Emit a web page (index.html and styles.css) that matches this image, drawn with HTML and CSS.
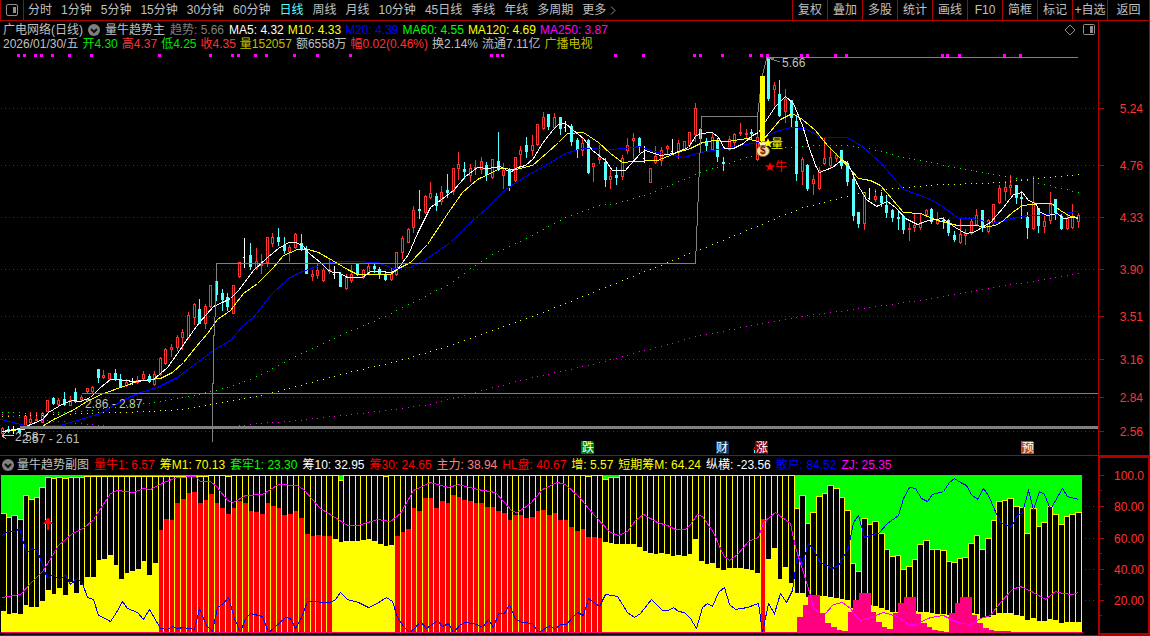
FILE: index.html
```html
<!DOCTYPE html>
<html lang="zh-CN">
<head>
<meta charset="utf-8">
<title>广电网络 日线</title>
<link rel="stylesheet" href="styles.css">
</head>
<body>
<div class="app">
  <header class="topbar">
    <button class="side-toggle" aria-label="侧栏">
      <svg class="icon" width="14" height="14" viewBox="0 0 14 14"><rect x="1.500" y="1.500" width="11" height="11" rx="1.500" class="ico-line"/><rect x="8" y="4" width="3" height="6" class="ico-fill"/></svg>
    </button>
    <nav class="periods">
      <button>分时</button><button>1分钟</button><button>5分钟</button><button>15分钟</button><button>30分钟</button><button>60分钟</button><button class="active">日线</button><button>周线</button><button>月线</button><button>10分钟</button><button>45日线</button><button>季线</button><button>年线</button><button>多周期</button><button class="more">更多<svg class="icon" width="6" height="9" viewBox="0 0 6 9"><path d="M1 .5 5 4.500 1 8.500" class="ico-line"/></svg></button>
    </nav>
    <div class="tools">
      <button>复权</button><button>叠加</button><button>多股</button><button>统计</button><button>画线</button><button>F10</button><button>简框</button><button>标记</button><button>+自选</button><button class="back">返回</button>
    </div>
  </header>

  <main>
    <section class="panel">
      <div class="plot">
        <div class="info main-info">
          <div class="line">
            <span>广电网络(日线)</span>
            <button class="drop" aria-label="指标菜单"><svg class="icon" width="12" height="12" viewBox="0 0 12 12"><circle cx="6" cy="6" r="6" class="ico-disc"/><path d="M3 5 6 8 9 5" class="ico-check"/></svg></button>
            <span>量牛趋势主</span>
            <span class="dim">趋势: 5.66</span>
            <span class="metrics"><span class="white">MA5: 4.32</span><span class="yellow">M10: 4.33</span><span class="blue">M20: 4.39</span><span class="green">MA60: 4.55</span><span class="yellow">MA120: 4.69</span><span class="magenta">MA250: 3.87</span></span>
            <span class="corner">
              <svg class="icon" width="12" height="12" viewBox="0 0 12 12"><path d="M6 1 11 6 6 11 1 6Z" class="ico-line"/></svg>
              <svg class="icon" width="12" height="12" viewBox="0 0 12 12"><rect x=".5" y=".5" width="11" height="10" rx="1" class="ico-line"/><rect x="7" y="2" width="3" height="7" class="ico-fill"/></svg>
            </span>
          </div>
          <div class="line quote">
            <span>2026/01/30/五</span><span class="lime">开4.30</span><span class="red">高4.37</span><span class="lime">低4.25</span><span class="red">收4.35</span><span class="olive">量152057</span><span>额6558万</span><span class="red">幅0.02(0.46%)</span><span>换2.14%</span><span>流通7.11亿</span><span class="olive">广播电视</span>
          </div>
        </div>
        <svg id="price" class="chart" viewBox="0 51 1098 404" role="img" aria-label="日K线图">
          <g id="grid"></g>
          <g id="signals"></g>
          <g id="candles"></g>
          <g id="averages"></g>
          <path class="trend" d="M212.500 442V383H213.500V335H214.500L216.500 263.500H695.500L701.500 116.500H757.500L762 77 767 57.500H1078"/>
          <path class="trend" d="M82 393.500H1098"/>
          <rect class="band" x="20" y="426" width="1078" height="3"/>
          <path class="trend" d="M768 58 780 62M769 58H774"/>
          <rect class="surge" x="760" y="76" width="5" height="65"/>
          <g class="smooth">
            <path class="star-y" d="M768 138l1.400 3.400 3.700.2-2.900 2.300 1 3.600-3.200-2-3.100 2 1-3.600-2.900-2.300 3.600-.2Z"/>
            <path class="knot" d="M759 142l2 1 2-1.500 2 1.500 1.500-.5-1.500 4h-5Z"/>
            <ellipse cx="763" cy="151" rx="6.500" ry="5.500" class="bag"/>
            <text class="coin" x="760" y="154">$</text>
            <path class="star-r" d="M770 162l1.400 3.200 3.700.2-2.900 2.300 1 3.400-3.200-1.900-3.100 1.900 1-3.400-2.900-2.300 3.600-.2Z"/>
          </g>
          <text class="t-yellow" x="771" y="148">量</text>
          <text class="t-red" x="775" y="171">牛</text>
          <text x="782" y="67">5.66</text>
          <text x="85" y="408">2.86 - 2.87</text>
          <path class="mark-line" d="M2 435.500H14M2.500 436 6 432M2.500 436 6 439"/>
          <text x="15" y="441">2.58</text>
          <text x="22" y="443">2.57 - 2.61</text>
          <g class="badge">
            <path fill="#008000" d="M581 441H593L594 443V454H581Z"/><text x="582" y="452">跌</text>
            <path fill="#003870" d="M716 441H728L729 443V454H716Z"/><text x="716" y="452">财</text>
            <path fill="#ff0000" d="M753 450 756 445V448Z"/><path fill="#54ffff" d="M754 450H756V453H754Z"/>
            <path fill="#800000" d="M755 441H767L768 443V454H755Z"/><text x="756" y="452">涨</text>
            <path fill="#c04810" d="M1021 441H1033L1034 443V454H1021Z"/><text x="1022" y="452">预</text>
          </g>
        </svg>
      </div>
      <svg class="axis" viewBox="1098 21 52 434" id="priceAxis" role="img" aria-label="价格刻度"></svg>
    </section>

    <section class="panel">
      <div class="plot">
        <div class="info sub-info">
          <button class="drop" aria-label="副图菜单"><svg class="icon" width="12" height="12" viewBox="0 0 12 12"><circle cx="6" cy="6" r="6" class="ico-disc"/><path d="M3 5 6 8 9 5" class="ico-check"/></svg></button>
          <div class="line">
            <span>量牛趋势副图</span><span class="pure">量牛1: 6.57</span><span class="yellow">筹M1: 70.13</span><span class="green">套牢1: 23.30</span><span class="white">筹10: 32.95</span><span class="pure">筹30: 24.65</span><span class="pink">主力: 38.94</span><span class="pure">HL盘: 40.67</span><span class="yellow">增: 5.57</span><span class="yellow">短期筹M: 64.24</span><span class="white">纵横: -23.56</span><span class="blue">散户: 84.52</span><span class="magenta">ZJ: 25.35</span>
          </div>
        </div>
        <svg id="sub" class="chart" viewBox="0 475 1098 160" role="img" aria-label="量牛趋势副图">
          <g id="columns"></g>
          <g id="curves"></g>
          <path class="base" d="M1 632.500H1083"/>
          <path class="buy" d="M48 517 53 524H49V530H47V524H43Z"/>
        </svg>
      </div>
      <svg class="axis sub-axis" viewBox="1098 456 52 179" id="subAxis" role="img" aria-label="副图刻度"></svg>
    </section>
  </main>
</div>
<script src="chart.js"></script>
</body>
</html>
```

FILE: styles.css
```css
* { box-sizing: border-box; }

body {
  margin: 0;
  background: #000;
  color: #c0c0c0;
  font: 12px/14px "Liberation Sans", "Noto Sans CJK SC", sans-serif;
}

button {
  margin: 0;
  padding: 0;
  border: 0;
  background: none;
  color: inherit;
  font: inherit;
  white-space: nowrap;
  cursor: pointer;
}

.app { overflow: hidden; }
.icon { display: block; flex: none; }
.ico-line { fill: none; stroke: #909090; }
.ico-fill { fill: #909090; }
.ico-disc { fill: #808080; }
.ico-check { fill: none; stroke: #101010; stroke-width: 2; }

.topbar {
  display: flex;
  height: 21px;
  border-bottom: 1px solid #b00000;
}
.side-toggle {
  display: grid;
  place-items: center;
  width: 24px;
  border: solid #b00000;
  border-width: 0 1px;
}
.periods { display: flex; gap: 9px; padding-left: 4px; }
.periods .active { color: #54ffff; }
.more { display: flex; align-items: center; gap: 4px; }
.tools { display: flex; margin-left: auto; border-right: 1px solid #b00000; }
.tools button { width: 35px; border-left: 1px solid #b00000; }
.tools .back { width: 42px; }

.panel {
  display: flex;
  border-bottom: 1px solid #b00000;
}
.plot { flex: 1098; min-width: 0; }
.axis { flex: 52; min-width: 0; display: block; }
.chart { display: block; width: 100%; height: auto; }

.info { white-space: nowrap; }
.main-info { padding: 2px 3px 0; }
.line { display: flex; align-items: center; gap: 5px; height: 14px; }
.quote { gap: 4px; }
.metrics { display: flex; gap: 4px; }
.corner { display: flex; gap: 7px; margin-left: auto; }
.sub-info { display: flex; gap: 3px; align-items: center; height: 19px; padding: 0 0 2px 2px; }

.dim { color: #808080; }
.white { color: #fff; }
.yellow { color: #ff0; }
.blue { color: #00f; }
.green { color: #0f0; }
.lime { color: #00e600; }
.magenta { color: #f0f; }
.red { color: #ff3232; }
.pure { color: #f00; }
.pink { color: #ff8080; }
.olive { color: #c0c000; }

svg text { fill: #c0c0c0; font: 12px "Liberation Sans", "Noto Sans CJK SC", sans-serif; }
.chart, .axis { shape-rendering: crispEdges; }
.smooth { shape-rendering: auto; }
.axis text { fill: #ff3232; text-anchor: end; }
.axis-line { fill: none; stroke: #b00000; }
.axis-box { fill: none; stroke: #b00000; stroke-width: 2; }
.grid-line { stroke: #b00000; stroke-dasharray: 1 3; }
.trend { fill: none; stroke: #808080; }
.mark-line { fill: none; stroke: #c0c0c0; }
.band { fill: #808080; }
.surge, .star-y { fill: #ff0; }
.star-r, .buy { fill: #f00; }
.bag { fill: #f4dca0; stroke: #806020; }
.knot { fill: #fff0c8; }
.curve { fill: none; }
.base { stroke: #ff0080; }
svg .coin { fill: #602000; font-size: 10px; font-weight: bold; }
svg .t-yellow { fill: #ff0; }
svg .t-red { fill: #f00; }
.badge text { fill: #fff; }
```

FILE: chart.js
```js
const NS = 'http://www.w3.org/2000/svg';
const byId = (id) => document.getElementById(id);
function add(parent, tag, attrs, text) {
  const el = document.createElementNS(NS, tag);
  for (const k in attrs) el.setAttribute(k, attrs[k]);
  if (text) el.textContent = text;
  parent.appendChild(el);
}
const rect = (p, x, y, width, height, fill) => {
  if (height > 0 && width > 0) add(p, 'rect', { x, y, width, height, fill });
};
const centre = (i) => Math.floor(2.6 + 5.632 * i);

/* Candles: kind (r up, c down, w flat), high, body top, body bottom, low */
const candles = `r427 428 433 434,c426 429 431 432,w426 430 431 433,c428 429 432 433,r415 416 426 427,r412 419 422 423,r412 419 420 420,r412 413 422 422,r400 400 411 411,c397 398 403 404,r398 400 404 406,c392 399 404 405,r396 400 405 405,c388 392 401 402,r395 397 399 400,r388 388 391 393,r386 387 391 392,c369 369 377 382,r370 375 377 378,r373 373 378 380,c369 373 379 380,c374 379 386 387,r379 382 385 386,w378 381 382 384,r376 380 382 383,r371 374 378 380,c374 376 381 382,r371 374 384 385,r357 358 374 375,r348 349 363 364,r344 347 349 356,r335 337 347 350,r329 332 337 349,r312 315 337 338,r303 304 317 324,c299 309 323 323,r304 306 323 328,r285 285 306 307,c280 281 294 300,c289 293 299 310,c293 297 306 310,r285 285 313 313,r262 262 276 277,w238 257 258 267,c243 255 266 269,r248 261 268 269,r254 264 265 273,r237 237 262 266,r233 237 243 246,c228 237 241 245,c237 245 250 253,r245 247 251 261,r233 234 247 248,c234 243 249 250,c246 249 273 273,r270 274 276 280,r263 270 275 278,r268 270 280 281,r258 269 271 273,w266 274 275 278,c272 274 286 286,r274 276 288 289,r265 274 280 282,c264 264 274 275,r269 270 277 278,r264 266 273 274,c264 266 268 272,c267 269 274 278,c271 274 279 280,r268 274 279 280,r252 252 274 275,r236 238 252 258,r228 229 242 242,r206 210 227 232,c190 209 210 218,r195 196 212 213,r182 193 197 198,c193 196 205 210,r186 192 201 204,c174 190 192 197,r168 168 191 194,r152 164 168 179,c162 169 171 178,r164 168 175 181,r160 167 168 174,r157 161 169 173,c162 165 174 180,r159 159 177 178,c132 161 169 170,r163 170 175 188,c168 169 185 190,r157 157 180 181,r146 150 154 167,c137 145 151 157,r135 145 150 155,r124 124 144 145,r112 117 128 129,c114 114 126 129,r113 117 127 128,c117 117 128 134,w121 127 128 131,c124 126 141 145,c138 140 149 157,r138 143 150 155,c139 140 172 173,r163 163 166 181,r145 157 159 163,c158 162 179 186,r170 176 179 188,c167 175 177 184,r155 158 176 179,r138 145 150 153,r133 138 140 158,c137 138 145 152,w146 158 159 162,r168 168 182 182,r146 156 162 163,r147 150 160 165,r145 146 148 153,w139 151 152 152,r140 143 152 158,r141 141 150 150,r132 132 145 146,r103 108 134 141,c128 129 138 139,c138 142 145 150,r132 137 149 150,c138 141 156 161,c157 162 163 170,r136 139 149 150,r133 134 142 146,r123 132 133 135,r129 133 134 137,c129 132 133 138,r117 137 159 160,r141 141 142 142,c57 57 98 100,r82 85 89 105,c80 94 115 116,r89 99 111 122,c100 100 117 126,c115 121 173 180,r157 159 171 184,c164 165 188 190,r175 179 183 194,r167 170 188 189,r138 158 163 164,r147 157 165 167,r153 155 158 161,c150 150 165 168,c161 163 181 185,c176 179 215 220,c212 212 223 227,r192 192 223 229,w188 198 199 199,r189 196 199 201,c192 196 202 206,c195 205 212 217,c209 210 217 221,c210 217 218 229,c215 216 229 233,r223 228 229 240,r214 225 227 231,r213 223 227 229,r209 210 214 216,c208 209 221 223,r212 220 223 224,c217 220 221 228,c219 220 232 235,c231 235 239 241,r218 234 242 243,r229 233 235 244,r219 221 233 234,r209 215 224 225,c210 210 227 231,r219 220 231 232,r204 204 223 225,r185 188 202 203,r181 187 191 200,r175 185 187 194,c185 185 197 203,c191 197 198 218,c212 217 227 238,r176 202 228 229,c208 208 225 232,r216 221 226 232,r192 204 220 223,c199 199 212 219,c214 216 228 229,r214 218 228 229,r204 217 227 228,r213 215 221 227`;
const tone = { r: '#ff3232', c: '#54ffff', w: '#ffffff' };
candles.split(',').forEach((row, i) => {
  const g = byId('candles'), x = centre(i), fill = tone[row[0]];
  const [h, t, b, l] = row.slice(1).split(' ').map(Number);
  rect(g, x, h, 1, l - h + 1, fill);
  if (row[0] === 'w') return rect(g, x - 1, t, 2, 1, fill);
  rect(g, x - 1, t, 3, b - t + 1, fill);
  if (row[0] === 'r') rect(g, x, t + 1, 1, b - t - 1, '#000');
});

/* Grid lines and price scale */
const prices = [[108, '5.24'], [165, '4.76'], [217, '4.33'], [269, '3.90'], [316, '3.51'], [359, '3.16'], [397, '2.84'], [431, '2.56']];
const pa = byId('priceAxis');
add(pa, 'path', { d: 'M1098.5 21V455M1149.5 21V455', class: 'axis-line' });
prices.forEach(([y, label]) => {
  add(byId('grid'), 'path', { d: `M1 ${y + .5}H1094`, class: 'grid-line' });
  add(pa, 'path', { d: `M1098 ${y + .5}H1104`, class: 'axis-line' });
  add(pa, 'text', { x: 1143, y: y + 5 }, label);
});
const sa = byId('subAxis');
add(sa, 'rect', { x: 1099, y: 457, width: 50, height: 177, class: 'axis-box' });
[[475, '100.0'], [506, '80.00'], [538, '60.00'], [569, '40.00'], [600, '20.00']].forEach(([y, label], i) => {
  if (i) add(byId('columns'), 'path', { d: `M1085 ${y + .5}H1096`, class: 'grid-line' });
  add(sa, 'path', { d: `M1100 ${y + .5}H1104M1100 ${y + 15.5}H1102`, class: 'axis-line' });
  add(sa, 'text', { x: 1144, y: y + 5 }, label);
});

/* Signal squares along the top edge */
[18, 24, 35, 41, 52, 69, 91, 159, 210, 232, 238, 255, 266, 294, 317, 350, 491, 497, 502, 615, 643, 694, 700, 722, 750, 761, 767, 801, 807, 835, 846, 942, 947, 959, 1004, 1020]
  .forEach((x) => rect(byId('signals'), x - 1, 54, 3, 3, '#f0f'));

const parse = (s) => s.trim().split(' ').map((p) => p.split(',').map(Number));
/* Curves run through pixel centres so that steep parts stay unbroken */
function line(parent, pts, stroke) {
  const points = parse(pts).map(([x, y]) => `${x + .5},${y + .5}`).join(' ');
  add(byId(parent), 'polyline', { points, class: 'curve', stroke });
}
/* One pixel for each trading day along a curve */
function dots(pts, fill) {
  const p = parse(pts);
  for (let i = 0; i < 192; i++) {
    const x = centre(i);
    const k = Math.max(1, p.findIndex((q) => q[0] >= x));
    const [a, b] = [p[k - 1], p[k]];
    rect(byId('averages'), x, Math.round(a[1] + (b[1] - a[1]) * (x - a[0]) / (b[0] - a[0])), 1, 1, fill);
  }
}
dots('2,412 43,413 90,410 133,404 150,403 167,400 187,396 207,392 233,385 260,375 283,362 307,350 347,332 380,318 417,300 450,283 470,268 490,255 510,246 537,232 567,216 600,205 620,202 650,193 695,174 713,168 747,157 775,148 817,145 847,145 873,149 903,157 940,164 980,172 1010,177 1040,183 1078,192', '#0f0');
dots('2,416 60,414 80,413 150,411 180,409 213,404 245,398 273,392 300,385 340,374 400,360 447,346 545,311 650,269 680,257 695,251 752,228 780,216 803,207 823,202 858,193 880,190 903,187 940,184 980,183 1003,182 1027,179 1078,174', '#ff0');
dots('2,414 30,419 60,421 80,423 120,427 160,428 200,428 217,427 240,425 260,423 297,420 370,412 430,404 520,380 600,362 700,335 800,316 900,303 982,289 1078,273', '#f0f');
line('averages', '0,419 13,422 28,426 60,425 77,420 100,413 117,403 137,393 157,387 177,377 193,365 213,350 230,340 243,325 253,317 270,295 288,278 302,271 322,264 337,261 353,261 377,262 393,268 410,267 427,258 450,242 467,225 487,207 505,189 527,175 547,164 565,153 582,148 613,149 640,146 653,151 683,157 700,152 713,150 733,146 758,142 773,132 790,127 805,128 820,137 847,137 863,147 880,162 903,189 928,198 942,206 958,218 973,218 992,223 1012,218 1027,215 1057,214 1070,212 1078,211', '#00f');
line('averages', '2,431 20,429 40,427 53,419 72,410 88,400 103,393 123,386 137,381 150,379 160,378 172,372 183,362 195,347 207,333 217,319 230,310 243,293 257,283 272,268 283,255 297,249 308,249 318,252 332,260 347,269 357,274 390,274 400,267 410,262 427,244 448,212 462,192 477,179 500,168 515,169 532,165 547,152 558,142 567,133 583,132 598,142 610,153 622,162 633,161 657,160 677,152 690,148 702,142 713,140 727,141 747,138 760,142 770,131 780,119 792,113 802,119 815,130 827,145 840,158 858,178 870,180 880,185 903,212 920,213 937,220 957,225 977,225 983,227 995,225 1003,220 1012,212 1022,205 1040,203 1051,203 1060,210 1070,216 1078,217', '#ff0');
line('averages', '2,431 20,428 33,423 42,419 48,412 63,403 72,400 80,401 90,397 100,387 110,379 117,379 133,381 153,379 167,367 177,353 188,337 199,322 213,306 222,302 230,298 238,290 253,270 267,257 278,248 288,242 295,242 302,245 310,254 320,262 327,269 332,272 338,272 347,277 362,277 370,271 380,271 390,272 397,269 408,254 417,233 430,207 437,202 453,190 465,176 477,167 487,168 500,166 510,172 517,167 525,165 533,158 542,143 552,130 558,124 565,123 573,130 583,138 592,150 605,160 612,170 625,170 630,164 640,153 645,150 660,155 673,153 688,147 695,136 700,133 712,132 718,137 724,148 733,148 743,143 752,135 758,132 767,118 775,106 785,96 793,103 802,125 808,145 815,165 819,172 832,167 842,159 848,164 857,184 866,199 876,206 887,201 895,207 905,218 917,224 928,220 942,218 955,227 965,233 973,232 990,222 1003,207 1013,194 1022,192 1028,200 1035,203 1040,212 1047,215 1057,213 1063,218 1073,217 1078,218', '#fff');

/* Sub chart columns: value:count repeats a value */
const expand = (s) => s.split(' ').flatMap((t) => {
  const [v, n = 1] = t.split(':').map(Number);
  return Array(n).fill(v);
});
const tops = expand('513 517 515 519 495 499 497 487 477 478 477 478 477:3 476:22 475:3 476 475:19 480 475:7 476 475:35 476 475:2 479 477:2 475:31 508 495 523 512 496 493 485 488 497 510 563 571 518 524 521 533 549 556 555 569 566 559 544 540 549:2 550 561 562 558 557 543 535 549 538 520 501 500 498 506 507 533 508 526 522 506 514 524 516 514 512');
const lows = expand('611 614 613 614 605 607:2 601 590 594 588 595 582 593 585 577:2 560 559 555 565 579 573 571 569 561 575 563 530 519 520 503 499 493 492 503 500 494 503 508 514 508 501 503 511 512 514 503 506 508 515 514 511 518 534 536 535 536:2 539 542 541:3 540 539 541 544 546 545 536 532 529 508 511 498:2 508 501 503 495 497 500 501 503:2 507:2 511 513 520 515:2 518 517 511 510 515 513 520:2 527 531 529 537:2 538 542 543 544:4 547 551 553 554 553 554 556 555 556 554 539 561 564 563 568 570 568:3 569 570 573 519 559 548 579 567 583 593:2 597 596:3 597 598 599 600 608 606 604 605 606 608 610 612:2 608:2 611 612:2 613 614:2 615 613 612:2 613 614 618 617 615 613:3 615 616 620 618 621:2 619 620 623 622:3');
const cols = byId('columns');
const edge = (i) => Math.round(1 + 5.628 * i);
const isRed = (i) => (i > 27 && i < 59) || (i > 69 && i < 107) || i === 135;
for (let i = 0; i < 192; i++) {
  const x = edge(i), w = edge(i + 1) - x;
  rect(cols, x, 475, w, tops[i] - 475, '#0f0');
  rect(cols, x, tops[i], w, 632 - tops[i], '#ff0');
  rect(cols, x, tops[i] + 1, w - 1, lows[i] - tops[i] - 1, '#000');
  if (isRed(i)) rect(cols, x, lows[i], w - 1, 632 - lows[i], '#f00');
  if (i) rect(cols, x - 1, Math.min(tops[i], tops[i - 1]), 1, 60, '#ff0');
}
const hills = expand('617 605 595:2 613 623 627 630 631 612 600 593:2 612 622 627 629 613 603 597:2 614 623 627 630 631 632 613 603 597:2 615 623 628 630 631:3');
hills.forEach((y, k) => {
  const x = Math.round((142 + k) * 5.628 - 2.2);
  rect(cols, x, y, 6, 632 - y, '#ff0080');
});

line('curves', '2,535 8,531 15,531 19,528 26,552 32,548 37,551 47,578 53,574 59,580 65,574 70,584 77,578 82,583 87,597 93,599 98,615 103,617 110,621 116,612 122,601 127,608 137,612 143,619 149,609 160,628 167,629 172,626 177,628 183,627 194,629 199,608 206,625 212,631 217,607 223,603 228,597 234,618 240,632 245,618 250,613 262,616 268,632 273,628 285,617 290,618 295,628 301,617 307,601 330,602 335,599 340,592 347,599 358,602 368,607 375,604 386,597 392,601 397,617 403,626 409,632 414,628 420,621 426,628 437,620 442,626 448,623 453,632 460,624 465,622 477,624 482,627 488,619 493,627 498,613 504,613 509,604 515,619 522,622 532,623 538,632 550,625 554,629 560,624 566,624 572,617 577,612 583,615 588,598 599,606 605,594 617,596 627,612 634,617 640,613 651,599 662,610 668,610 673,607 678,611 684,612 690,618 696,628 702,607 707,603 712,606 718,592 724,587 729,604 735,609 747,607 758,603 762,632 768,603 774,613 780,593 786,602 792,590 797,553 802,563 808,543 814,550 819,561 832,568 838,565 848,547 853,522 858,515 864,537 872,534 878,533 887,523 898,515 903,498 909,487 915,488 921,498 927,501 932,494 943,491 949,482 954,478 960,482 966,485 971,494 977,499 983,488 988,495 994,509 1000,522 1011,526 1017,515 1022,512 1028,490 1033,509 1039,491 1044,494 1050,509 1062,488 1067,496 1078,499', '#00f');
line('curves', '2,597 20,594 30,583 43,570 58,545 72,533 83,528 93,519 110,493 117,490 133,492 143,488 150,489 163,482 177,477 195,476 200,481 210,481 217,487 227,500 233,502 245,495 262,494 278,484 297,485 303,489 320,508 333,516 347,525 358,525 377,519 390,521 400,513 413,490 430,482 448,487 458,484 477,489 495,492 512,511 517,512 530,503 542,489 557,482 565,484 580,498 593,514 610,532 618,535 627,531 635,520 643,514 657,522 667,525 675,529 685,529 690,524 697,514 702,516 713,532 723,555 729,560 737,554 748,541 758,537 763,522 775,512 790,523 795,547 808,588 813,607 820,613 825,613 833,604 842,602 850,608 859,620 867,618 883,612 897,616 908,624 915,624 930,617 943,615 957,622 970,624 980,618 990,615 1000,602 1012,589 1020,586 1033,592 1045,599 1055,591 1062,593 1072,594 1078,592', '#f0f');
```
